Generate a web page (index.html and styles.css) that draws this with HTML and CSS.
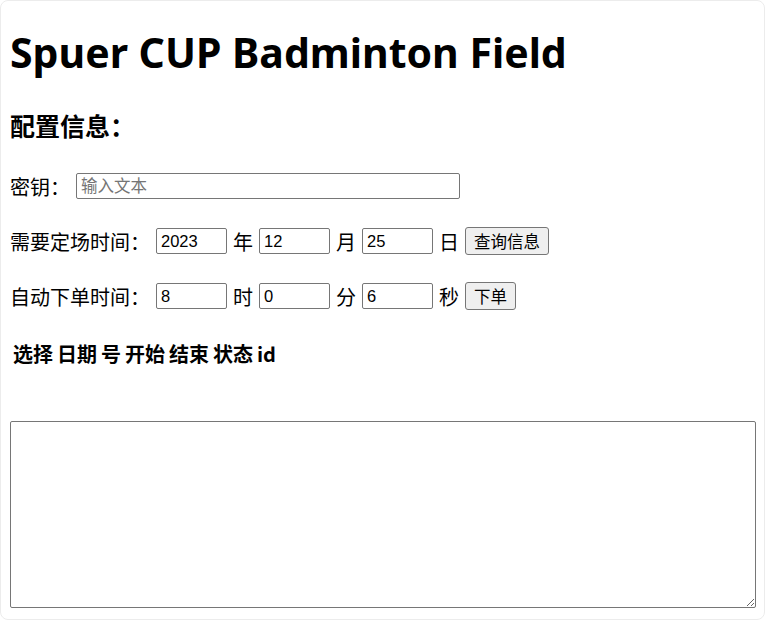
FILE: index.html
```html
<!DOCTYPE html>
<html lang="zh">
<head>
<meta charset="utf-8">
<title>Spuer CUP Badminton Field</title>
<link rel="stylesheet" href="styles.css">
</head>
<body>
<div class="page">
  <h1 class="title">Spuer CUP Badminton Field</h1>
  <h2 class="subtitle">配置信息：</h2>
  <div class="row">
    <span class="label">密钥：</span>
    <input class="field field-key" type="text" placeholder="输入文本">
  </div>
  <div class="row">
    <span class="label">需要定场时间：</span>
    <input class="field field-num" type="text" value="2023">
    <span class="unit">年</span>
    <input class="field field-num" type="text" value="12">
    <span class="unit">月</span>
    <input class="field field-num" type="text" value="25">
    <span class="unit">日</span>
    <button class="btn" type="button">查询信息</button>
  </div>
  <div class="row">
    <span class="label">自动下单时间：</span>
    <input class="field field-num" type="text" value="8">
    <span class="unit">时</span>
    <input class="field field-num" type="text" value="0">
    <span class="unit">分</span>
    <input class="field field-num" type="text" value="6">
    <span class="unit">秒</span>
    <button class="btn" type="button">下单</button>
  </div>
  <table class="grid">
    <thead>
      <tr>
        <th>选择</th><th>日期</th><th>号</th><th>开始</th><th>结束</th><th>状态</th><th>id</th>
      </tr>
    </thead>
    <tbody></tbody>
  </table>
  <textarea class="log"></textarea>
</div>
</body>
</html>
```

FILE: styles.css
```css
html, body {
  margin: 0;
  padding: 0;
  background: #ffffff;
}
body {
  font-family: "Noto Sans", "Noto Sans CJK SC", sans-serif;
  font-size: 20px;
  color: #000;
}
.page {
  min-height: 620px;
  box-sizing: border-box;
  padding: 1px 9px;
  border: 1px solid #ececec;
  border-radius: 8px;
}
.title {
  font-size: 41px;
  font-weight: 700;
  margin: 23px 0 0 0;
  line-height: 54px;
}
.subtitle {
  font-size: 25px;
  font-weight: 700;
  margin: 29px 0 0 0;
  line-height: 34px;
  font-family: "Noto Sans CJK SC", sans-serif;
}
.row {
  display: flex;
  align-items: center;
  height: 30px;
  margin-top: 25px;
  font-family: "Noto Sans CJK SC", sans-serif;
}
.subtitle + .row {
  margin-top: 29px;
}
.label {
  margin-right: 6px;
}
.unit {
  margin: 0 6px;
}
.field {
  box-sizing: border-box;
  height: 26px;
  border: 1px solid #767676;
  border-radius: 2px;
  padding: 1px 4px;
  font-family: "Liberation Sans", Arial, "Noto Sans CJK SC", sans-serif;
  font-size: 16.5px;
  color: #000;
  background: #fff;
}
.field::placeholder {
  color: #757575;
  font-family: "Noto Sans CJK SC", sans-serif;
}
.field-key {
  width: 384px;
}
.field-num {
  width: 71px;
}
.btn {
  box-sizing: border-box;
  height: 28px;
  padding: 0 8px;
  border: 1px solid #767676;
  border-radius: 3px;
  background: #efefef;
  font-family: "Noto Sans CJK SC", sans-serif;
  font-size: 16.5px;
  color: #000;
}
.grid {
  margin-top: 26px;
  border-spacing: 2.5px;
  font-family: "Noto Sans CJK SC", sans-serif;
}
.grid th {
  font-weight: 700;
  padding: 1px;
  font-size: 20px;
  line-height: 28px;
}
.log {
  display: block;
  box-sizing: border-box;
  width: 746px;
  height: 187px;
  margin-top: 50px;
  border: 1px solid #767676;
  border-radius: 2px;
}
```
